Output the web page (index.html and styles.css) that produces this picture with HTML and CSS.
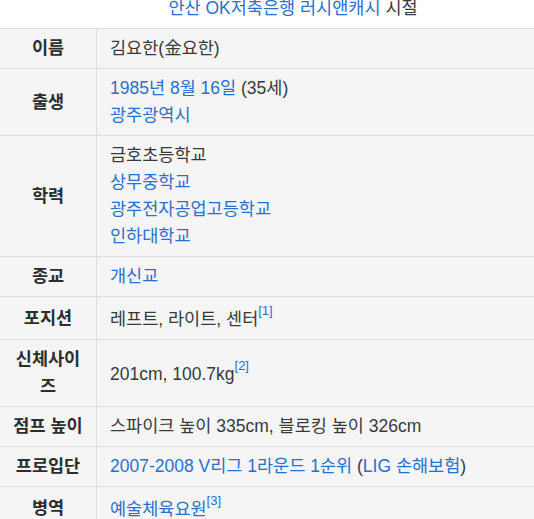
FILE: index.html
```html
<!DOCTYPE html>
<html lang="ko">
<head>
<meta charset="utf-8">
<link rel="stylesheet" href="styles.css">
</head>
<body>
<div class="wrap">
  <div class="caption"><a href="#">안산 OK저축은행 러시앤캐시</a> 시절</div>
  <table class="info">
    <tr><th>이름</th><td>김요한(金요한)</td></tr>
    <tr><th>출생</th><td><a href="#">1985년</a> <a href="#">8월 16일</a> (35세)<br><a href="#">광주광역시</a></td></tr>
    <tr><th>학력</th><td>금호초등학교<br><a href="#">상무중학교</a><br><a href="#">광주전자공업고등학교</a><br><a href="#">인하대학교</a></td></tr>
    <tr><th>종교</th><td><a href="#">개신교</a></td></tr>
    <tr><th>포지션</th><td>레프트, 라이트, 센터<sup><a href="#">[1]</a></sup></td></tr>
    <tr><th>신체사이즈</th><td>201cm, 100.7kg<sup><a href="#">[2]</a></sup></td></tr>
    <tr><th>점프 높이</th><td>스파이크 높이 335cm, 블로킹 높이 326cm</td></tr>
    <tr><th>프로입단</th><td><a href="#">2007-2008 V리그 1라운드 1순위</a> (<a href="#">LIG 손해보험</a>)</td></tr>
    <tr><th>병역</th><td><a href="#">예술체육요원</a><sup><a href="#">[3]</a></sup></td></tr>
  </table>
</div>
</body>
</html>
```
FILE: styles.css
```css
html, body {
  margin: 0;
  padding: 0;
  background: #fff;
  overflow: hidden;
}
body {
  font-family: "Liberation Sans", "Noto Sans CJK KR", sans-serif;
  font-size: 17.5px;
  line-height: 27px;
  color: #373a3c;
}
a {
  color: #2a6fcf;
  text-decoration: none;
}
.wrap {
  width: 586px;
  margin-top: -5px;
}
.caption {
  text-align: center;
  padding-bottom: 6px;
}
.info {
  width: 100%;
  border-collapse: collapse;
  background: #f5f5f5;
}
.info th, .info td {
  border-top: 1px solid #dddddd;
  border-bottom: 1px solid #dddddd;
  padding: 6px 13px;
  vertical-align: middle;
}
.info th {
  width: 70px;
  padding: 6px 13px;
  border-right: 1px solid #dddddd;
  font-weight: bold;
  text-align: center;
  color: #2b2d2f;
}
.info td {
  text-align: left;
}
sup {
  font-size: 13px;
  line-height: normal;
  vertical-align: 10px;
}
```
